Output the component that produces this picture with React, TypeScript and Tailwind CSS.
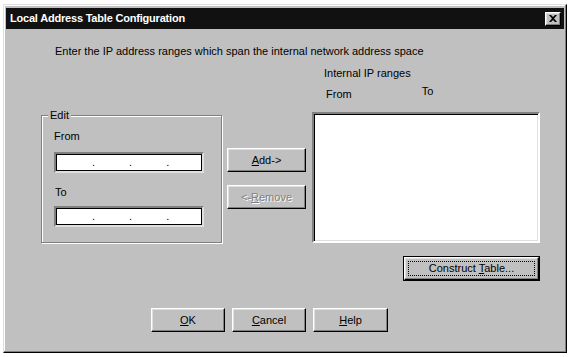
const raised =
  "border border-t-white border-l-white border-r-black border-b-black shadow-[inset_-1px_-1px_#808080,inset_1px_1px_#dfdfdf]";
const sunken =
  "border-2 border-t-[#808080] border-l-[#808080] border-r-white border-b-white shadow-[inset_1px_1px_#000,inset_-1px_-1px_#dfdfdf]";
const field =
  "border-2 border-t-[#808080] border-l-[#808080] border-r-[#dfdfdf] border-b-[#dfdfdf] shadow-[inset_0_0_0_1px_#000]";

const Button = ({ children, w, disabled }: { children: React.ReactNode; w: string; disabled?: boolean }) => (
  <div
    className={`${raised} ${w} h-[24px] flex items-center justify-center pt-[1px] text-[11px] leading-none ${
      disabled ? "text-[#808080] [text-shadow:1px_1px_#fff]" : "text-black"
    }`}
  >
    {children}
  </div>
);

const IpInput = () => (
  <div className={`${field} w-[150px] h-[21px] bg-white flex items-end pb-[3px] pl-[36px] gap-[34px] text-[11px] leading-none`}>
    <span>.</span>
    <span>.</span>
    <span>.</span>
  </div>
);

export default function App() {
  return (
    <div className="w-[573px] h-[357px] bg-white pt-[4px] pl-[3px] font-['Liberation_Sans',Arial,sans-serif] text-black">
      <div className="w-[564px] h-[349px] bg-[#c0c0c0] border border-t-[#dfdfdf] border-l-[#dfdfdf] border-r-black border-b-black shadow-[inset_-1px_-1px_#808080,inset_1px_1px_#fff] p-[2px] flex flex-col">
        {/* title bar */}
        <div className="h-[21px] mt-[1px] bg-[#111] flex items-center justify-between pl-[4px] pr-[3px]">
          <span className="text-white font-bold text-[11px] tracking-[-0.2px]">Local Address Table Configuration</span>
          <div className={`${raised} w-[16px] h-[14px] bg-[#c0c0c0] flex items-center justify-center`}>
            <svg width="8" height="7" viewBox="0 0 8 7">
              <path d="M0 0h2l2 2 2-2h2L5 3.5 8 7H6L4 5 2 7H0l3-3.5z" fill="#000" />
            </svg>
          </div>
        </div>

        <p className="ml-[49px] mt-[16px] text-[11px] leading-[13px]">
          Enter the IP address ranges which span the internal network address space
        </p>

        <div className="flex mt-[5px]">
          {/* Edit group */}
          <div className="ml-[35px] mt-[52px] w-[181px] h-[128px] border border-[#808080] shadow-[inset_1px_1px_#fff,1px_1px_#fff] relative px-[12px]">
            <span className="absolute -top-[7px] left-[6px] bg-[#c0c0c0] px-[2px] text-[11px] leading-[13px]">Edit</span>
            <div className="mt-[14px] text-[11px] leading-[13px]">From</div>
            <div className="mt-[9px]">
              <IpInput />
            </div>
            <div className="mt-[13px] ml-[1px] text-[11px] leading-[13px]">To</div>
            <div className="mt-[7px]">
              <IpInput />
            </div>
          </div>

          {/* add / remove */}
          <div className="ml-[5px] mt-[85px] flex flex-col gap-[13px]">
            <Button w="w-[79px]">
              <span>
                <u>A</u>dd-&gt;
              </span>
            </Button>
            <Button w="w-[79px]" disabled>
              <span>
                &lt;-<u>R</u>emove
              </span>
            </Button>
          </div>

          {/* internal ranges */}
          <div className="ml-[6px] w-[228px] flex flex-col">
            <div className="mt-[4px] ml-[12px] text-[11px] leading-[13px]">Internal IP ranges</div>
            <div className="flex items-start text-[11px] leading-[13px]">
              <span className="ml-[14px] mt-[8px]">From</span>
              <span className="ml-[70px] mt-[5px]">To</span>
            </div>
            <div className={`${sunken} mt-[11px] w-[228px] h-[131px] bg-white`} />
            <div className="mt-[13px] ml-[91px] w-[137px] h-[25px] border border-black">
              <div className={`${raised} h-full p-[3px]`}>
                <div className="h-full border border-dotted border-black flex items-center justify-center text-[11px] leading-none">
                  <span>
                    Construct <u>T</u>able...
                  </span>
                </div>
              </div>
            </div>
          </div>
        </div>

        <div className="flex ml-[145px] mt-[27px] gap-[7px]">
          <Button w="w-[74px]">
            <span>
              <u>O</u>K
            </span>
          </Button>
          <Button w="w-[74px]">
            <span>
              <u>C</u>ancel
            </span>
          </Button>
          <Button w="w-[75px]">
            <span>
              <u>H</u>elp
            </span>
          </Button>
        </div>
      </div>
    </div>
  );
}
